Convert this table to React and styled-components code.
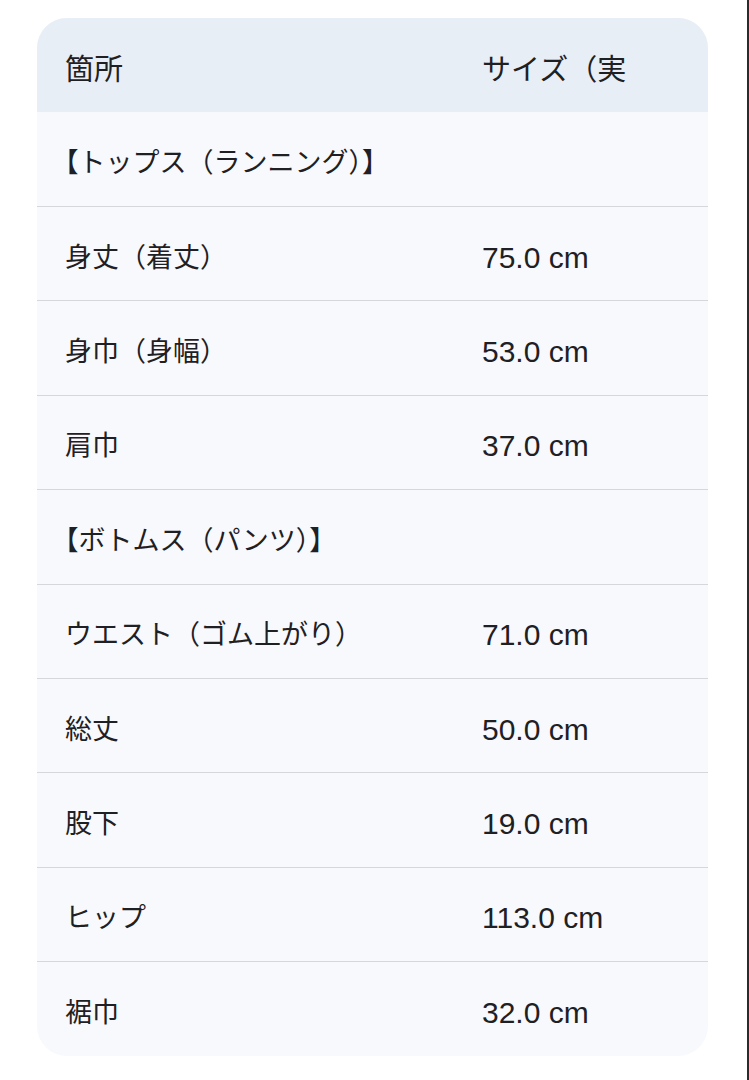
import React from "react";
import styled, { createGlobalStyle } from "styled-components";

const Global = createGlobalStyle`
  html, body { margin: 0; padding: 0; background: #ffffff; }
  body {
    font-family: "Liberation Sans", "Noto Sans CJK JP", sans-serif;
    color: #1f2023;
  }
`;

const Page = styled.div`
  min-height: 100vh;
  padding: 18px 41px 24px 37px;
  box-sizing: border-box;
  box-shadow: inset -2px 0 0 #2b2b2b;
`;

const Card = styled.div`
  background: #f7f9fd;
  border-radius: 30px;
  overflow: hidden;
`;

const Row = styled.div`
  display: grid;
  grid-template-columns: 417px 1fr;
  box-sizing: border-box;
  height: ${(p) => (p.$head ? "93.6px" : "94.4px")};
  background: ${(p) => (p.$head ? "#e7eef6" : "transparent")};
  border-top: ${(p) => (p.$sep ? "1px solid #d5d7db" : "none")};
  align-items: center;
`;

const Cell = styled.div`
  padding: ${(p) => (p.$head ? "10px" : "8px")} 28px 0;
  font-size: ${(p) => (p.$head ? "29px" : p.$jp ? "27px" : "30px")};
  line-height: 40px;
  white-space: nowrap;
  overflow: hidden;
  text-spacing-trim: trim-start;
`;

const rows = [
  ["【トップス（ランニング）】", ""],
  ["身丈（着丈）", "75.0 cm"],
  ["身巾（身幅）", "53.0 cm"],
  ["肩巾", "37.0 cm"],
  ["【ボトムス（パンツ）】", ""],
  ["ウエスト（ゴム上がり）", "71.0 cm"],
  ["総丈", "50.0 cm"],
  ["股下", "19.0 cm"],
  ["ヒップ", "113.0 cm"],
  ["裾巾", "32.0 cm"],
];

export default function App() {
  return (
    <>
      <Global />
      <Page>
        <Card>
          <Row $head>
            <Cell $head>箇所</Cell>
            <Cell $head>サイズ（実</Cell>
          </Row>
          {rows.map(([a, b], i) => (
            <Row key={i} $sep={i > 0}>
              <Cell $jp>{a}</Cell>
              <Cell>{b}</Cell>
            </Row>
          ))}
        </Card>
      </Page>
    </>
  );
}
